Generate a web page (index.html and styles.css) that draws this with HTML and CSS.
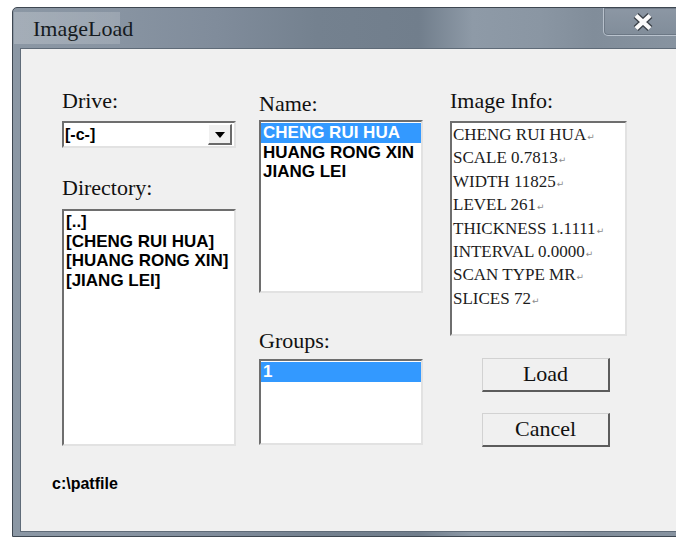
FILE: index.html
```html
<!DOCTYPE html>
<html lang="en">
<head>
<meta charset="utf-8">
<title>ImageLoad</title>
<link rel="stylesheet" href="styles.css">
</head>
<body>
<div class="window">
  <div class="titlebar">
    <span class="title">ImageLoad</span>
    <div class="close">
      <svg width="24" height="20" viewBox="0 0 24 20">
        <path d="M5 3.5 L19 16.5 M19 3.5 L5 16.5" stroke="#3b4148" stroke-width="7" fill="none"/>
        <path d="M5 3.5 L19 16.5 M19 3.5 L5 16.5" stroke="#fbfbfb" stroke-width="4.4" fill="none"/>
      </svg>
    </div>
  </div>
  <div class="client">
    <div class="columns">
      <div class="col col-left">
        <div class="label">Drive:</div>
        <div class="combo">
          <span class="combo-text">[-c-]</span>
          <span class="combo-btn"><span class="arrow"></span></span>
        </div>
        <div class="label label-dir">Directory:</div>
        <div class="listbox list-dir">
          <div class="item">[..]</div>
          <div class="item">[CHENG RUI HUA]</div>
          <div class="item">[HUANG RONG XIN]</div>
          <div class="item">[JIANG LEI]</div>
        </div>
      </div>
      <div class="col col-mid">
        <div class="label label-name">Name:</div>
        <div class="listbox list-name">
          <div class="item selected">CHENG RUI HUA</div>
          <div class="item">HUANG RONG XIN</div>
          <div class="item">JIANG LEI</div>
        </div>
        <div class="label label-groups">Groups:</div>
        <div class="listbox list-groups">
          <div class="item selected">1</div>
        </div>
      </div>
      <div class="col col-right">
        <div class="label">Image Info:</div>
        <div class="info">
          <div class="info-line">CHENG RUI HUA<span class="mark">↵</span></div>
          <div class="info-line">SCALE 0.7813<span class="mark">↵</span></div>
          <div class="info-line">WIDTH 11825<span class="mark">↵</span></div>
          <div class="info-line">LEVEL 261<span class="mark">↵</span></div>
          <div class="info-line">THICKNESS 1.1111<span class="mark">↵</span></div>
          <div class="info-line">INTERVAL 0.0000<span class="mark">↵</span></div>
          <div class="info-line">SCAN TYPE MR<span class="mark">↵</span></div>
          <div class="info-line">SLICES 72<span class="mark">↵</span></div>
        </div>
        <div class="buttons">
          <div class="button btn-load">Load</div>
          <div class="button btn-cancel">Cancel</div>
        </div>
      </div>
    </div>
    <div class="path">c:\patfile</div>
  </div>
</div>
</body>
</html>
```
FILE: styles.css
```css
html, body {
  margin: 0;
  padding: 0;
}

body {
  background: #ffffff;
  width: 676px;
  height: 539px;
  overflow: hidden;
}

/* window frame + caption */
.window {
  margin: 7px 0 0 12px;
  width: 678px;
  height: 530px;
  box-sizing: border-box;
  border: 1px solid #3e4751;
  border-radius: 5px 5px 0 0;
  padding: 0 7px 4px 7px;
  display: flex;
  flex-direction: column;
  background:
    linear-gradient(to right, rgba(255,255,255,0.22), rgba(255,255,255,0.16)) no-repeat 1px 4px / 106px 32px,
    linear-gradient(to right,
      #8b97a4 0%, #8894a2 15%, #808c9b 30%,
      #74818f 45%, #717e8c 60%, #8e9aa7 68%,
      #8a96a3 78%, #818d9a 86%, #8894a1 100%);
}

.titlebar {
  height: 40px;
  display: flex;
  align-items: flex-start;
}

.title {
  font: 22px/24px "Liberation Serif", serif;
  color: #151a20;
  padding: 9px 0 0 13px;
}

.close {
  margin-left: auto;
  width: 79px;
  height: 28px;
  box-sizing: border-box;
  border: 1px solid rgba(225,232,240,0.55);
  border-top: none;
  border-radius: 0 0 5px 5px;
  box-shadow: inset 0 0 0 1px rgba(60,70,82,0.3);
  background: linear-gradient(#8c97a4, #818d9a);
  display: flex;
  align-items: center;
  justify-content: center;
  padding-top: 1px;
}

/* dialog body */
.client {
  flex: 1;
  background: #f0f0f0;
  border: 1px solid #5f6b78;
  padding: 40px 0 0 31px;
  box-sizing: border-box;
}

.columns {
  display: flex;
  align-items: flex-start;
  padding-left: 10px;
}

.col {
  display: flex;
  flex-direction: column;
}

.col-left { width: 174px; }
.col-mid { width: 164px; margin-left: 23px; }
.col-right { width: 177px; margin-left: 27px; }

.label {
  font: 22px/24px "Liberation Serif", serif;
  color: #111;
}

.label-dir { margin-top: 28px; }
.label-name { margin-top: 3px; }
.label-groups { margin-top: 36px; }

/* sunken 3D edge shared by the inputs */
.combo,
.listbox,
.info {
  box-sizing: border-box;
  background: #ffffff;
  border-top: 2px solid #6e6e6e;
  border-left: 2px solid #6e6e6e;
  border-right: 2px solid #e2e2e2;
  border-bottom: 2px solid #e2e2e2;
}

.combo {
  margin-top: 8px;
  height: 27px;
  display: flex;
  align-items: center;
  padding: 0 0 0 1px;
}

.combo-text {
  font: bold 16px/19px "Liberation Sans", Arial, sans-serif;
  color: #000;
}

.combo-btn {
  margin-left: auto;
  margin-right: 2px;
  width: 24px;
  height: 21px;
  box-sizing: border-box;
  background: #f0f0f0;
  border-top: 1px solid #ffffff;
  border-left: 1px solid #ffffff;
  border-right: 2px solid #6a6a6a;
  border-bottom: 2px solid #6a6a6a;
  display: flex;
  align-items: center;
  justify-content: center;
}

.arrow {
  width: 0;
  height: 0;
  border-left: 5px solid transparent;
  border-right: 5px solid transparent;
  border-top: 6px solid #000;
  margin-top: 1px;
}

.listbox {
  padding-top: 1px;
}

.list-dir { margin-top: 9px; height: 237px; }
.list-name { margin-top: 4px; height: 173px; }
.list-groups { margin-top: 6px; height: 86px; }

.item {
  font: bold 17px/19.5px "Liberation Sans", Arial, sans-serif;
  color: #000;
  padding: 0 2px;
  white-space: nowrap;
}

.list-groups .item {
  line-height: 20px;
}

.item.selected {
  background: #3399ff;
  color: #ffffff;
}

.info {
  margin-top: 8px;
  height: 215px;
  padding-left: 1px;
}

.info-line {
  font: 17px/23.4px "Liberation Serif", serif;
  color: #1c1c1c;
  white-space: nowrap;
}

.mark {
  font: 9px "DejaVu Sans", sans-serif;
  color: #8c8c8c;
  margin-left: 1px;
}

.buttons {
  margin-left: 32px;
  width: 128px;
  display: flex;
  flex-direction: column;
}

.button {
  height: 34px;
  box-sizing: border-box;
  background: #f0f0f0;
  border-top: 1px solid #d2d2d2;
  border-left: 1px solid #d2d2d2;
  border-right: 2px solid #5c5c5c;
  border-bottom: 2px solid #5c5c5c;
  font: 22px/30px "Liberation Serif", serif;
  color: #111;
  text-align: center;
}

.btn-load { margin-top: 22px; }
.btn-cancel { margin-top: 21px; }

.path {
  margin-top: 27px;
  font: bold 16px/19px "Liberation Sans", Arial, sans-serif;
  color: #000;
}
```
